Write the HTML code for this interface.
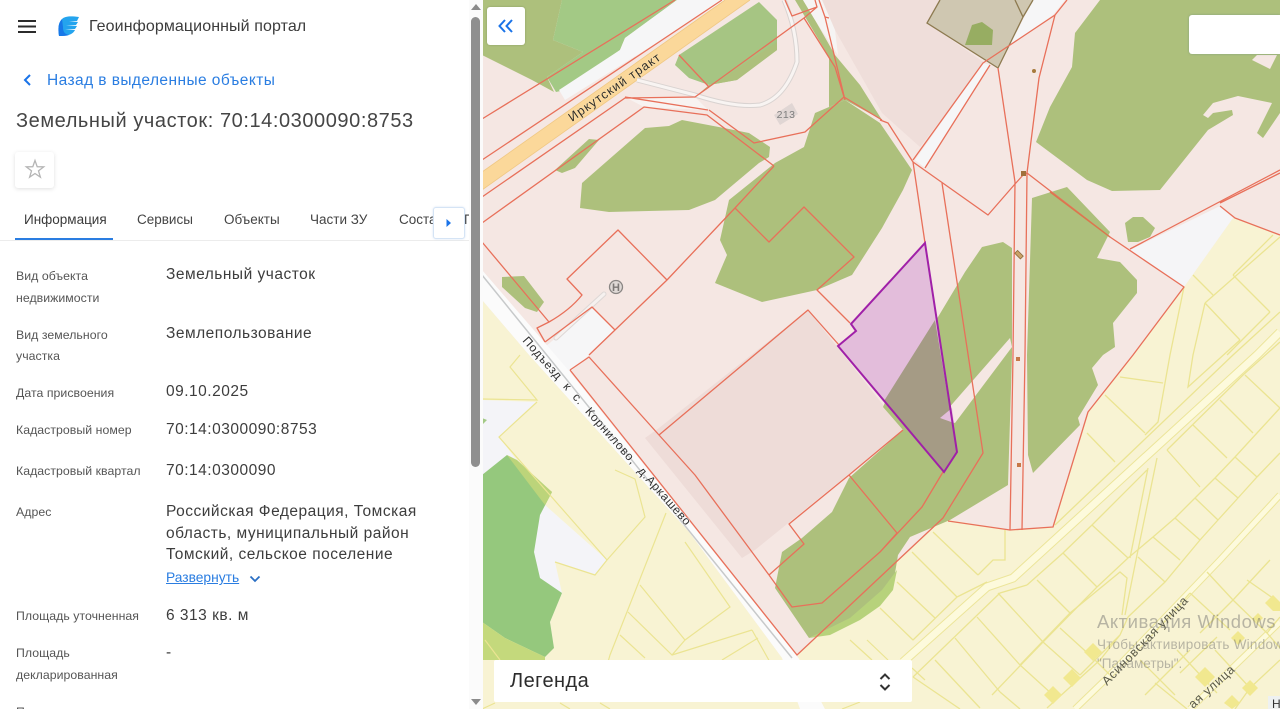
<!DOCTYPE html>
<html lang="ru"><head><meta charset="utf-8"><title>Геоинформационный портал</title>
<style>
html,body{margin:0;padding:0;width:1280px;height:709px;overflow:hidden;background:#fff;font-family:"Liberation Sans","Noto Sans CJK SC",sans-serif}
#map{position:absolute;left:0;top:0;filter:blur(.35px)}
#side{position:absolute;left:0;top:0;width:483px;height:709px;background:#fff;overflow:hidden}
.t{position:absolute;white-space:nowrap;line-height:20px;height:20px}
.l{font-size:12.3px;color:#555;letter-spacing:.04px}
.v{font-size:15.5px;color:#3d3d3d;letter-spacing:.5px;left:166px}
.tab{font-size:13.5px;color:#444;top:210px}
.box{position:absolute;background:#fff}
#wmw{position:absolute;left:1097px;top:605px;width:183px;height:75px;overflow:hidden}
.wm{position:absolute;left:0;white-space:nowrap;color:rgba(105,105,105,.45)}
</style></head><body>
<svg id="map" width="1280" height="709" viewBox="0 0 1280 709" font-family="Liberation Sans, sans-serif">
<rect x="482" width="798" height="709" fill="#f5e7e3"/>
<!-- top left -->
<polygon points="482,0 562,0 553,40 583,52 547,77 554,92 532,80 482,55" fill="#adc07c"/>
<polygon points="562,0 677,0 625,38 620,50 565,90 556,92 547,77 583,52 553,40" fill="#a3c985"/>
<polygon points="677,0 725,0 565,100 559,90 620,50 625,38" fill="#f6f6f7"/>
<polygon points="725,0 750,0 482,190 482,172" fill="#fbd89a"/>
<path d="M725 0L482 172M750 0L482 190" stroke="#f0c884" stroke-width=".8" fill="none"/>
<polygon points="625,97 695,97 708,110 644,107" fill="#f8f3f1"/>
<polygon points="679,55 759,2 777,20 777,50 737,80 709,85 689,78 675,65" fill="#a6c583"/>
<polygon points="695,97 777,42 777,50 737,80 709,85" fill="#adc07c"/>
<path d="M637 80L695 95Q735 108 760 105Q785 98 797 62Q797 30 784 0" fill="none" stroke="#d9d3d1" stroke-width="5"/>
<path d="M637 80L695 95Q735 108 760 105Q785 98 797 62Q797 30 784 0" fill="none" stroke="#f8f4f2" stroke-width="3"/>
<!-- building top -->
<polygon points="822,0 940,0 927,23 985,63 920,147 882,113 835,30" fill="#efdeda"/>
<polygon points="795,0 803,0 815,20 835,55 860,85 882,120 845,100 829,107 829,57" fill="#adc07c"/>
<polygon points="803,0 822,0 835,30 838,55 815,20" fill="#f6f4f3"/>
<polygon points="983,63 990,65 925,168 915,160" fill="#f6f6f7"/>
<polygon points="1033,0 1065,0 1053,15 1010,45" fill="#f6f6f7"/>
<polygon points="940,0 927,23 998,68 1023,17 1015,0" fill="#cfc7b1"/>
<polygon points="1015,0 1023,17 1033,0" fill="#cfc7b1"/>
<polygon points="965,45 972,25 982,22 993,30 992,45" fill="#97ad62"/>
<path d="M940 0L927 23L998 68L1023 17L1015 0M1023 17L1033 0" fill="none" stroke="#8d7a50" stroke-width="1.3"/>
<!-- greens -->
<polygon points="682,120 724,128 749,133 770,147 769,157 759,163 715,200 689,210 609,212 580,208 582,183 645,128 669,126" fill="#adc07c"/>
<polygon points="599,140 589,139 555,170 562,173 575,168" fill="#adc07c"/>
<polygon points="502,277 524,276 544,302 537,312 525,308 502,287" fill="#adc07c"/>
<polygon points="829,107 815,113 804,147 775,163 729,200 720,240 727,255 715,283 762,302 817,290 852,275 882,228 903,190 912,170 880,123 845,100" fill="#adc07c"/>
<polygon points="1100,0 1075,33 1072,67 1050,107 1036,142 1087,180 1112,191 1160,190 1208,130 1233,115 1232,110 1213,113 1208,118 1203,115 1213,103 1238,96 1272,103 1257,133 1263,138 1280,113 1280,0" fill="#adc07c"/>
<polygon points="1252,60 1257,55 1277,55 1270,69" fill="#f5e7e3"/>
<polygon points="1032,198 1067,187 1110,232 1097,258 1120,262 1137,280 1137,293 1113,323 1115,347 1103,355 1092,368 1098,385 1078,418 1080,425 1033,473 1028,455 1027,355" fill="#adc07c"/>
<polygon points="1125,223 1133,217 1143,217 1155,228 1150,237 1138,242 1128,242" fill="#adc07c"/>
<!-- road + white lot -->
<polygon points="545,347 592,307 615,330 589,355 570,372" fill="#f6f6f7"/>
<polygon points="482,270 570,372 800,660 825,709 790,709 782,658 689,532 529,355 482,300" fill="#fbfbfb"/>
<path d="M482 275L792 658" stroke="#c7c9ca" stroke-width="1.5" fill="none"/>
<path d="M556 338L604 294" stroke="#ded8d6" stroke-width="5" stroke-linecap="round"/>
<path d="M556 338L604 294" stroke="#f6f1ef" stroke-width="3" stroke-linecap="round"/>
<!-- big building -->
<polygon points="808,310 903,430 755,550 742,558 645,438 659,428" fill="#eedcd8"/>
<!-- yellow east -->
<polygon points="1233,218 1280,235 1280,709 825,709 797,655 880,578 943,518 950,520 1010,530 1053,527 1088,412 1133,355 1184,287" fill="#f8f3d3"/>
<polygon points="1130,250 1220,206 1233,218 1184,287" fill="#f5f5f7"/>
<!-- yellow west -->
<polygon points="482,300 529,355 689,532 782,658 800,709 482,709" fill="#f8f3d3"/>
<polygon points="482,400 537,402 499,437 515,458 550,492 545,505 607,560 595,575 555,562 562,593 550,622 554,648 545,645 482,622" fill="#f4f4f8"/>
<polygon points="482,475 507,455 552,492 540,515 534,552 540,578 562,593 550,622 554,648 545,657 505,638 482,622" fill="#95c87d"/>
<polygon points="507,455 517,460 552,492 545,505" fill="#bcd47a"/>
<polygon points="482,622 505,638 545,657 545,660 482,660" fill="#c4d97c"/>
<polygon points="482,418 487,420 482,425" fill="#a3c985"/>
<!-- SW lines -->
<g fill="none" stroke="#ebe492" stroke-width="1.2">
<path d="M520 355L510 367L537 400L482 399M537 402L499 437L607 560L645 517L635 479L615 470M666 513L610 655L600 690M555 562L595 575L607 560M640 585L685 640L730 607L685 542M628 612L672 655L685 640M620 635L645 658M672 655L752 630M758 638L722 660M752 630L780 680M485 640L500 660M850 640L872 660M867 640L888 660M912 668L925 680M842 709L860 702M495 703L482 709M560 703L570 709M600 703L610 709"/>
</g>
<!-- lower green -->
<polygon points="982,247 1003,242 1012,248 1012,355 1008,485 950,520 910,537 898,555 893,585 880,605 809,638 775,588 782,552 802,538 832,512 849,478 903,430 883,407 887,398 913,355 938,317 965,272" fill="#adc07c"/>
<polygon points="809,638 850,618 882,590 897,570 893,590 880,606 860,620 830,635" fill="#b7d27b"/>
<polygon points="940,418 1010,338 1012,347 955,423" fill="#f5e7e3"/>
<!-- yellow grid -->
<path d="M903 662L987 587L1013 578L1257 355L1280 332" fill="none" stroke="#ece59a" stroke-width="9"/>
<path d="M903 662L987 587L1013 578L1257 355L1280 332" fill="none" stroke="#fdfadc" stroke-width="7"/>
<path d="M1075 709L1105 680L1220 560L1280 495" fill="none" stroke="#ece59a" stroke-width="7"/>
<path d="M1075 709L1105 680L1220 560L1280 495" fill="none" stroke="#fdfadc" stroke-width="5"/>
<path d="M1190 709L1280 622" fill="none" stroke="#ece59a" stroke-width="7"/>
<path d="M1190 709L1280 622" fill="none" stroke="#fdfadc" stroke-width="5"/>
<g fill="none" stroke="#ebe492" stroke-width="1.3">
<!-- north of main road -->
<path d="M1055 525L1233 355L1280 312M1233 275L1273 235M1193 275L1213 295M1205 303L1280 237M1233 275L1270 312M1205 303L1240 340M1270 312L1227 355M1184 287L1170 355L1158 422L1145 435M1205 303L1193 355L1188 387L1240 340M1120 377L1163 383M1105 395L1145 433M1087 433L1115 462"/>
<path d="M933 532L978 575M912 552L957 597M897 582L935 618M880 608L913 640M978 575L993 560H1005V530M957 597L987 582M913 640L957 597"/>
<!-- south of main road -->
<path d="M1027 585L1063 553L1092 525L1147 470M1167 450L1243 375L1280 342"/>
<path d="M913 677L1000 593L1027 585M998 593L1043 642M977 617L1020 665M955 638L1000 692M935 660L980 708M913 677L960 709"/>
<path d="M1037 580L1070 613M1063 553L1097 587M1092 525L1128 558"/>
<path d="M992 695L1043 642L1097 587L1128 558L1153 537L1175 518L1195 498L1215 478L1235 457L1257 433L1280 408"/>
<path d="M1167 450L1200 487M1193 425L1227 458M1220 400L1253 433M1245 375L1280 408"/>
<path d="M1153 537L1180 560M1175 518L1200 540M1195 498L1218 520M1215 478L1238 498M1235 457L1257 477"/>
<path d="M1128 617L1165 582L1200 540L1218 520L1238 498L1257 477L1280 453"/>
<path d="M1138 557L1165 582M1157 458L1137 555L1125 615M1148 468L1130 558"/>
<path d="M1020 665L1070 613L1120 572L1127 578L1122 615"/>
<path d="M1043 642L1080 675M1060 628L1093 658M1020 665L1053 695M1000 692L1020 709M1080 675L1120 635L1128 617M1047 708L1100 660L1120 635M1093 658L1113 678"/>
<!-- south-east of road 2 -->
<path d="M1207 572L1233 600L1270 560M1233 600L1200 633M1247 580L1280 603M1233 600L1267 633L1280 617M1155 683L1187 709M1177 650L1217 693M1180 673L1217 637M1145 695L1190 650M1190 593L1230 630M1190 593L1155 632M1215 650L1250 688M1140 660L1175 695M1250 688L1280 660M1235 709L1250 688M1267 633L1280 648"/>
</g>
<g fill="#f1e88f">
<polygon points="1093,643 1102,652 1093,661 1084,652"/>
<polygon points="1072,669 1081,678 1072,687 1063,678"/>
<polygon points="1053,686 1062,695 1053,704 1044,695"/>
<polygon points="1205,667 1215,677 1205,687 1195,677"/>
<polygon points="1250,680 1258,688 1250,696 1242,688"/>
<polygon points="1232,695 1240,703 1232,709 1224,703"/>
<polygon points="1238,631 1245,638 1238,645 1231,638"/>
<polygon points="1273,595 1280,602 1280,611 1273,611 1265,603"/>
<polygon points="1258,613 1263,618 1258,623 1253,618"/>
</g>
<!-- parcel lines -->
<g fill="none" stroke="#e8705a" stroke-width="1.3" stroke-linejoin="round">
<path d="M482 119L675 0M482 160L722 0M482 197L625 98L695 97M625 97L708 110M482 223L644 107L707 115L774 166"/>
<path d="M679 55L709 87L695 97L804 18L817 7M804 18L835 67L844 97L882 120M785 0L792 16L817 7L815 0M819 0L825 17L829 18M825 17L845 100"/>
<path d="M709 110L754 143L805 132L844 97M774 166L735 208L667 280L615 330L589 355M735 208L769 242L804 207L854 257L817 290L850 323"/>
<path d="M482 242L549 322L537 328L545 342M549 322Q570 310 582 295L567 279L618 230L667 280M545 342L592 307L615 330"/>
<path d="M570 370L589 357L659 435L695 475L769 575M570 370L797 655L943 518L983 453L942 183"/>
<path d="M769 575L792 607L822 603L880 552L922 507L943 472M769 575L804 544L789 524L849 475L897 533L880 552M659 435L808 310L839 345M849 475L903 430"/>
<path d="M880 120L888 123L913 162L925 243M913 162L988 215L1015 184L1024 174L1027 173L1110 237L1184 287L1133 355L1088 412L1053 527L1010 530L948 521M1130 249L1280 170M1220 203L1280 173M1220 206L1235 218L1280 235"/>
<path d="M913 160L983 63L1010 45L1055 15L1067 0M925 168L990 65M998 68L1015 182L1013 355L1010 530M1055 15L1039 78L1027 173L1025 355L1022 530"/>
</g>
<g fill="none" stroke="#d9784e" stroke-width="1.4"><path d="M1110 237L1050 192"/></g>
<!-- markers -->
<circle cx="1034" cy="71" r="2" fill="#a67a3c"/>
<rect x="1021" y="171" width="5" height="5" fill="#a0703c"/>
<rect x="1015.500" y="252.500" width="8" height="4" fill="#c9a268" stroke="#8d6a3c" stroke-width=".8" transform="rotate(45 1019 254)"/>
<rect x="1016" y="357" width="4" height="4" fill="#c77848"/>
<rect x="1017" y="463" width="4" height="4" fill="#c77848"/>
<!-- 213 -->
<polygon points="774,115 792,103 798,114 780,125" fill="#e0d6d4"/>
<text x="786" y="118" font-size="10.500" fill="#7d7d7d" text-anchor="middle" letter-spacing=".4">213</text>
<circle cx="616" cy="287" r="6.500" fill="#dfd9d6" stroke="#8a8684" stroke-width="1.300"/>
<text x="616" y="291" font-size="11" font-weight="bold" fill="#7c7876" text-anchor="middle">Н</text>
<!-- road labels -->
<text transform="translate(572,122) rotate(-35)" font-size="12.500" fill="#2f2c26" letter-spacing="1.100" style="paint-order:stroke" stroke="#fbe0ac" stroke-width="1">Иркутский  тракт</text>
<text transform="translate(522,341) rotate(48.500)" font-size="12" fill="#2f2f2f" letter-spacing=".75" xml:space="preserve" style="paint-order:stroke" stroke="#fff" stroke-width="1">Подъезд  к  с.  Корнилово,  д.Аркашево</text>
<text transform="translate(1107,686) rotate(-46)" font-size="12.500" fill="#5a5a48" letter-spacing=".8" style="paint-order:stroke" stroke="#f8f3d3" stroke-width="1">Асиновская улица</text>
<text transform="translate(1193,709) rotate(-42)" font-size="12.500" fill="#5a5a48" letter-spacing=".8" style="paint-order:stroke" stroke="#f8f3d3" stroke-width="1">ая  улица</text>
<!-- selected parcel -->
<polygon points="925,243 957,452 944,472 838,346 856,331 851,324" fill="#e3bddb"/>
<polygon points="935,320 957,452 944,472 884,401 913,355" fill="#a59b85"/>
<polygon points="940,418 952,408 954,423" fill="#e3bddb"/>
<polygon points="925,243 957,452 944,472 838,346 856,331 851,324" fill="none" stroke="#a020a8" stroke-width="2"/>
</svg>

<div id="wmw">
<div class="wm" style="top:6px;font-size:18.500px;line-height:22px;letter-spacing:.5px">Активация Windows</div>
<div class="wm" style="top:31px;font-size:13.500px;line-height:18px;letter-spacing:.25px">Чтобы активировать Windows, перейдите</div>
<div class="wm" style="top:50px;font-size:13.500px;line-height:18px">"Параметры".</div>
</div>

<div class="box" style="left:1268px;top:696px;width:12px;height:13px;background:#eef1f1;font-size:12px;line-height:16px;color:#333;text-indent:4px;overflow:hidden">Н</div>
<div class="box" style="left:487px;top:7px;width:38px;height:38px;border-radius:3px;box-shadow:0 0 2px rgba(0,0,0,.2)">
<svg width="38" height="38" fill="none" stroke="#1a73e8" stroke-width="2"><path d="M18 13L12.500 19L18 25M25 13L19.500 19L25 25"/></svg></div>
<div class="box" style="left:1189px;top:15px;width:91px;height:39px;border-radius:3px 0 0 3px;box-shadow:0 0 2px rgba(90,130,130,.5);clip-path:inset(-3px 0 -3px -3px)"></div>
<div class="box" style="left:494px;top:660px;width:418px;height:42px;border-radius:2px">
<div class="t" style="left:16px;top:11px;font-size:20px;letter-spacing:.45px;color:#2c2c2c">Легенда</div>
<svg style="position:absolute;left:384px;top:11px" width="14" height="22" fill="none" stroke="#333" stroke-width="2"><path d="M2.500 8L7 3.500L11.500 8M2.500 14L7 18.500L11.500 14"/></svg>
</div>

<div id="side">
<svg style="position:absolute;left:18px;top:20px" width="18" height="13"><path d="M0 1H18M0 6.500H18M0 12H18" stroke="#2b2b2b" stroke-width="2"/></svg>
<svg style="position:absolute;left:57px;top:16px" width="23" height="21" viewBox="0 0 23 21">
<path d="M2 20C1 13 1 7 5 3C8 0 14 0 22 1L20 5H12L21 6L19 9H9L20 10L18 13H8L18 14C16 18 12 20 2 20Z" fill="#24a4ee"/>
<path d="M2 20C1 13 1 7 5 3L6 11C6 15 7 18 12 19C9 20 6 20 2 20Z" fill="#1778e8"/></svg>
<div class="t" style="left:89px;top:17px;font-size:16px;letter-spacing:.09px;color:#3c3c3c">Геоинформационный портал</div>
<svg style="position:absolute;left:22px;top:73px" width="10" height="14" fill="none" stroke="#1a73e8" stroke-width="2"><path d="M8 2L3 7L8 12"/></svg>
<div class="t" style="left:47px;top:70.500px;font-size:15.500px;letter-spacing:.43px;color:#2a7de1">Назад в выделенные объекты</div>
<div class="t" style="left:16px;top:110px;font-size:20px;letter-spacing:.57px;color:#454545;line-height:22px;height:22px">Земельный участок: 70:14:0300090:8753</div>
<div class="box" style="left:15px;top:152px;width:39px;height:36px;border-radius:3px;box-shadow:0 1px 4px rgba(0,0,0,.13)">
<svg width="39" height="36" fill="none" stroke="#b5b5b5" stroke-width="1.300"><path d="M20 8.500L22.200 14.700L28.700 14.900L23.500 18.900L25.400 25.200L20 21.500L14.600 25.200L16.500 18.900L11.300 14.900L17.800 14.700Z"/></svg></div>
<div class="t tab" style="left:24px;color:#3a3a3a;letter-spacing:0">Информация</div>
<div class="t tab" style="left:137px">Сервисы</div>
<div class="t tab" style="left:224px">Объекты</div>
<div class="t tab" style="left:310px">Части ЗУ</div>
<div class="t tab" style="left:399px;width:34px;overflow:hidden">Состав</div>
<div class="t tab" style="left:464px;width:5px;overflow:hidden">П</div>
<div style="position:absolute;left:0;top:240px;width:469px;height:1px;background:#ececec"></div>
<div style="position:absolute;left:15px;top:238px;width:98px;height:2px;background:#2a7de1"></div>
<div class="box" style="left:433px;top:207px;width:30px;height:30px;border:1px solid #d5e4f5;border-radius:3px;box-shadow:0 0 2px rgba(60,120,200,.2)">
<svg width="30" height="30"><polygon points="12.500,11 17,15 12.500,19" fill="#1a73e8"/></svg></div>

<div class="t l" style="left:16px;top:266px">Вид объекта</div>
<div class="t l" style="left:16px;top:288px">недвижимости</div>
<div class="t l" style="left:16px;top:325px">Вид земельного</div>
<div class="t l" style="left:16px;top:346px">участка</div>
<div class="t l" style="left:16px;top:383px">Дата присвоения</div>
<div class="t l" style="left:16px;top:420px">Кадастровый номер</div>
<div class="t l" style="left:16px;top:461px">Кадастровый квартал</div>
<div class="t l" style="left:16px;top:502px">Адрес</div>
<div class="t l" style="left:16px;top:606px">Площадь уточненная</div>
<div class="t l" style="left:16px;top:643px">Площадь</div>
<div class="t l" style="left:16px;top:665px">декларированная</div>
<div class="t l" style="left:16px;top:702px">Площадь</div>

<div class="t v" style="top:265px">Земельный участок</div>
<div class="t v" style="top:324px">Землепользование</div>
<div class="t v" style="top:382px">09.10.2025</div>
<div class="t v" style="top:420px">70:14:0300090:8753</div>
<div class="t v" style="top:461px">70:14:0300090</div>
<div class="t v" style="top:502px">Российская Федерация, Томская</div>
<div class="t v" style="top:524px">область, муниципальный район</div>
<div class="t v" style="top:545px">Томский, сельское поселение</div>
<div class="t" style="left:166px;top:568px;font-size:13.800px;color:#2a7de1;text-decoration:underline">Развернуть</div>
<svg style="position:absolute;left:249px;top:574px" width="12" height="10" fill="none" stroke="#2a6fc4" stroke-width="1.800"><path d="M1.500 2.500L6 7L10.500 2.500"/></svg>
<div class="t v" style="top:606px">6 313 кв. м</div>
<div class="t v" style="top:643px">-</div>

<div style="position:absolute;left:469px;top:0;width:14px;height:709px;background:#fbfbfb"></div>
<div style="position:absolute;left:471px;top:17px;width:9px;height:450px;border-radius:5px;background:#8f8f8f"></div>
<svg style="position:absolute;left:470px;top:3px" width="12" height="8"><polygon points="1,7 6,1 11,7" fill="#8b8b8b"/></svg>
<svg style="position:absolute;left:470px;top:698px" width="12" height="8"><polygon points="1,1 11,1 6,7" fill="#8b8b8b"/></svg>
</div>
</body></html>
